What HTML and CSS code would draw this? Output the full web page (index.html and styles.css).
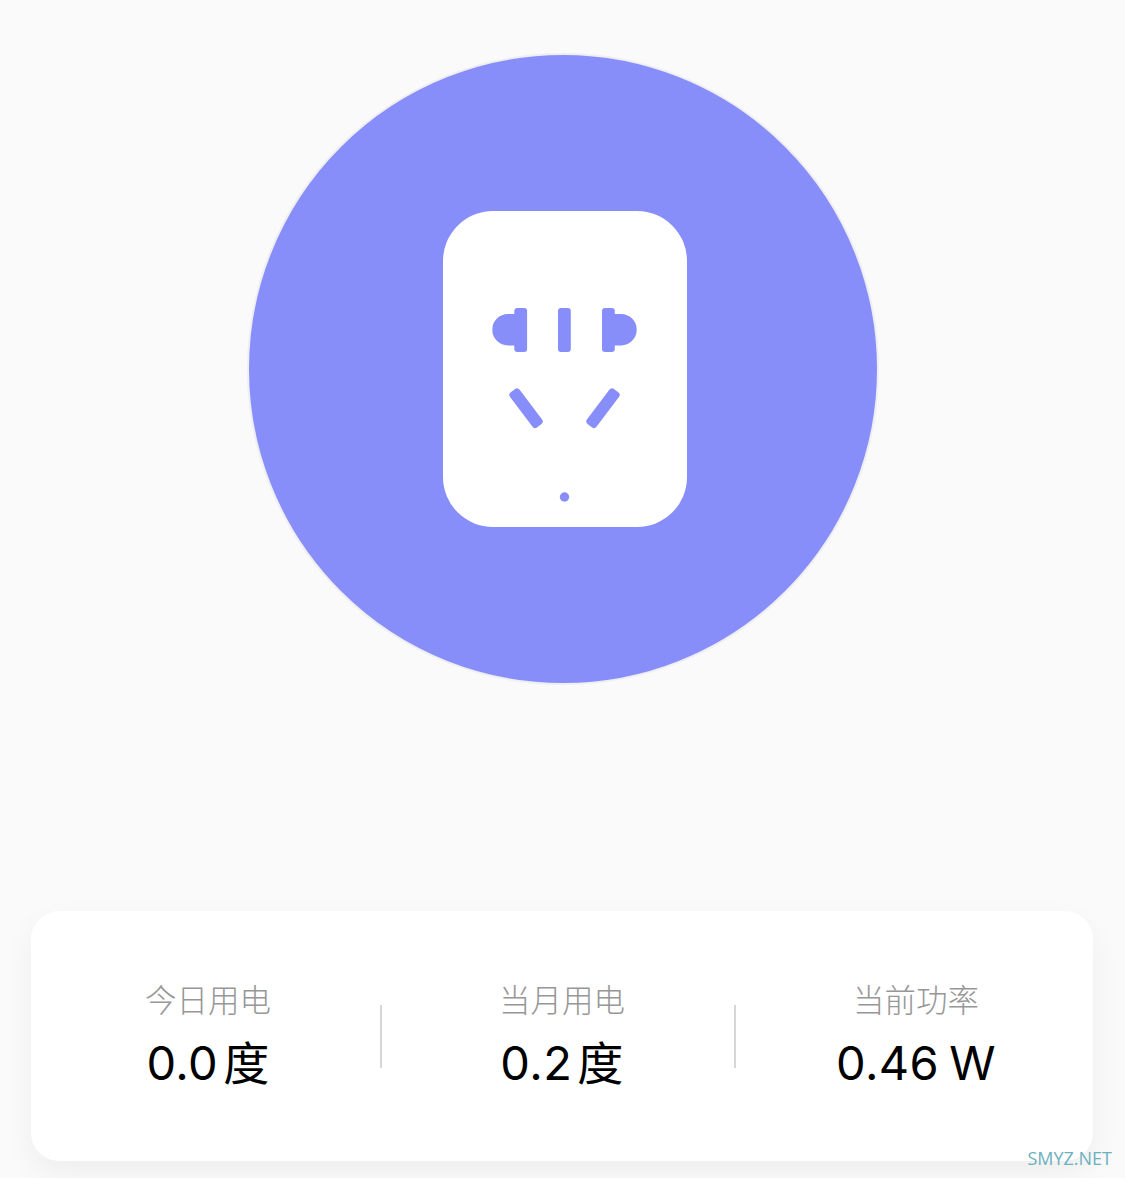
FILE: index.html
```html
<!DOCTYPE html>
<html lang="zh-CN">
<head>
<meta charset="utf-8">
<title>智能插座</title>
<link rel="stylesheet" href="styles.css">
</head>
<body>
<main class="page">
  <section class="hero">
    <div class="power-button">
      <svg class="socket" viewBox="0 0 244 316" width="244" height="316" aria-hidden="true">
        <rect class="socket-body" width="244" height="316" rx="50"/>
        <g class="socket-holes">
          <rect x="71.3" y="97" width="12.8" height="44" rx="3"/>
          <path d="M77 103H65a15.7 15.7 0 0 0 0 31.4H77z"/>
          <rect x="115" y="97" width="12.8" height="44" rx="3"/>
          <rect x="159" y="97" width="12.8" height="44" rx="3"/>
          <path d="M165 103H178a15.7 15.7 0 0 1 0 31.4H165z"/>
          <rect x="77" y="175.2" width="12" height="44" rx="3.5" transform="rotate(-37 83 197.2)"/>
          <rect x="154" y="175.2" width="12" height="44" rx="3.5" transform="rotate(37 160 197.2)"/>
          <circle cx="121.5" cy="286" r="4.7"/>
        </g>
      </svg>
    </div>
  </section>

  <section class="stats">
    <div class="stat">
      <div class="stat-label">今日用电</div>
      <div class="stat-value">0.0<span class="unit">度</span></div>
    </div>
    <div class="rule"></div>
    <div class="stat">
      <div class="stat-label">当月用电</div>
      <div class="stat-value">0.2<span class="unit">度</span></div>
    </div>
    <div class="rule"></div>
    <div class="stat">
      <div class="stat-label">当前功率</div>
      <div class="stat-value">0.46 W</div>
    </div>
  </section>
</main>
<div class="watermark">SMYZ.NET</div>
</body>
</html>
```
FILE: styles.css
```css
html, body {
  margin: 0;
  padding: 0;
  height: 100%;
  overflow: hidden;
  background: #fafafa;
}

body {
  position: relative;
  font-family: Inter, "Liberation Sans", "Noto Sans CJK SC", sans-serif;
}

.page {
  display: flex;
  flex-direction: column;
  padding: 53px 32px 0 31px;
}

.hero {
  display: flex;
  justify-content: center;
  height: 858px;
}

.power-button {
  box-sizing: border-box;
  display: flex;
  align-items: center;
  justify-content: center;
  width: 632px;
  height: 632px;
  margin-left: 2px;
  border-radius: 50%;
  background: #888ef9;
  border: 2px solid #eeeef3;
}

.socket {
  margin-left: 3px;
}

.socket-body {
  fill: #fff;
}

.socket-holes {
  fill: #888ef9;
}

.stats {
  display: grid;
  grid-template-columns: 349px 2px 352px 2px 357px;
  align-items: center;
  height: 250px;
  background: #fff;
  border-radius: 28px;
  box-shadow: 0 12px 30px rgba(0, 0, 0, 0.05);
}

.stat {
  display: flex;
  flex-direction: column;
  align-items: center;
  padding-left: 8px;
  padding-bottom: 4px;
}

.stat:first-child {
  padding-left: 5px;
}

.stat:last-child {
  padding-left: 8px;
  padding-right: 5px;
}

.stat-label {
  font-family: "Noto Sans CJK SC", sans-serif;
  font-size: 31.5px;
  font-weight: 300;
  line-height: 40px;
  color: #979797;
}

.stat-value {
  margin-top: 17px;
  font-size: 47px;
  line-height: 56px;
  letter-spacing: 0.4px;
  word-spacing: -3.5px;
  color: #000;
  white-space: nowrap;
}

.unit {
  margin-left: 5px;
  font-family: "Noto Sans CJK SC", sans-serif;
  font-size: 46px;
  font-weight: 400;
  line-height: 0;
}

.rule {
  width: 2px;
  height: 63px;
  background: #d6d6d6;
}

.watermark {
  position: absolute;
  right: 13px;
  bottom: 9px;
  font-family: "Open Sans", sans-serif;
  font-size: 18px;
  line-height: 22px;
  color: #6fb0be;
}
```
